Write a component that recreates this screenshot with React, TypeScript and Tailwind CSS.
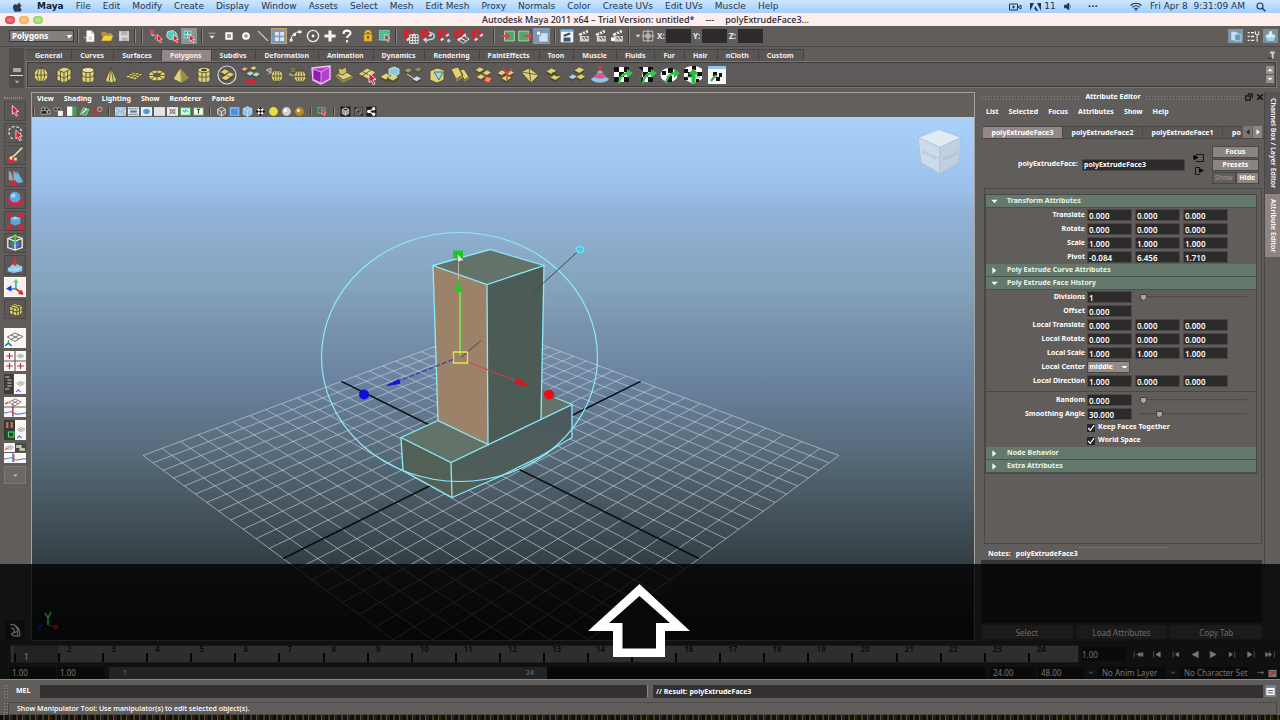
import React from 'react';

type IconProps = { children: React.ReactNode; className?: string; box?: string };

function Icon({ children, className = 'size-[20px]', box = '0 0 20 20' }: IconProps) {
  return (
    <svg viewBox={box} className={`${className} shrink-0`} aria-hidden="true">
      {children}
    </svg>
  );
}

function Grip({ className = 'h-[14px]' }: { className?: string }) {
  return <span className={`${className} w-[2px] shrink-0 border-x border-l-[#3c3a39] border-r-[#8b8886]`} />;
}

/* ---------- system menu bar ---------- */

const MENUS = [
  'File', 'Edit', 'Modify', 'Create', 'Display', 'Window', 'Assets', 'Select', 'Mesh', 'Edit Mesh',
  'Proxy', 'Normals', 'Color', 'Create UVs', 'Edit UVs', 'Muscle', 'Help',
];

function MenuBar() {
  return (
    <header className="flex h-[13px] shrink-0 items-center bg-linear-to-b from-[#cfe6ff] via-[#b4dbff] to-[#a9cdfb] pr-[14px] pl-[13px] font-['DejaVu_Sans',sans-serif] text-[9px] leading-[13px] text-[#22364f]">
      <Icon className="mr-[14px] size-[10px]" box="0 0 24 24">
        <path
          fill="#2b3a52"
          d="M16.5 1c.2 1.500-.4 3-1.300 4-.9 1.100-2.300 1.900-3.700 1.800-.2-1.400.5-2.900 1.300-3.800C13.700 1.900 15.300 1.100 16.500 1zM21 17.300c-.6 1.300-.9 1.900-1.600 3-1 1.600-2.500 3.500-4.300 3.500-1.600 0-2-1-4.200-1s-2.700 1-4.300 1c-1.800 0-3.200-1.700-4.200-3.300C-.4 16.100-.700 11 1.100 8.300 2.400 6.400 4.400 5.200 6.300 5.200c2 0 3.200 1.100 4.800 1.100 1.600 0 2.500-1.100 4.800-1.100 1.700 0 3.500.9 4.800 2.500-4.200 2.300-3.500 8.300.3 9.600z"
        />
      </Icon>
      <nav className="flex gap-[12px]" aria-label="Application">
        <button className="font-bold text-[#10203a]">Maya</button>
        {MENUS.map((m) => (
          <button key={m} className="whitespace-nowrap">{m}</button>
        ))}
      </nav>
      <div className="ml-auto flex items-center gap-[8px] whitespace-nowrap">
        <Icon className="h-[8px] w-[13px]" box="0 0 13 8">
          <path d="M.5 1h8v6h-8zM9 4l3-2v4z" fill="none" stroke="#22364f" />
          <path d="M3 4h3M4.500 2.500v3" stroke="#22364f" />
        </Icon>
        <span className="flex items-center gap-[3px]">
          <Icon className="h-[8px] w-[11px]" box="0 0 11 8">
            <path d="M0 0h4L0 8zM11 0H7l4 8zM5.500 3l2.500 5H6L5 6H4z" fill="#22364f" />
          </Icon>
          11
        </span>
        <Icon className="h-[7px] w-[8px]" box="0 0 8 7">
          <path d="M0 2.200h2L5 0v7L2 4.800H0zM6.500 2.500v2" fill="#22364f" stroke="#22364f" strokeWidth=".6" />
        </Icon>
        <span className="mx-[8px] font-bold">···</span>
        <Icon className="ml-[16px] h-[9px] w-[12px]" box="0 0 12 9">
          <path d="M.6 3.500a7.600 7.600 0 0 1 10.800 0M2.400 5.300a5 5 0 0 1 7.200 0M4.200 7.100a2.500 2.500 0 0 1 3.600 0" fill="none" stroke="#22364f" strokeWidth="1.200" />
          <circle cx="6" cy="8.200" r=".8" fill="#22364f" />
        </Icon>
        <span>Fri Apr 8&nbsp; 9:31:09 AM</span>
        <Icon className="ml-[3px] size-[10px]" box="0 0 10 10">
          <circle cx="4" cy="4" r="3" fill="none" stroke="#22364f" strokeWidth="1.100" />
          <path d="M6.200 6.200 9.300 9.300" stroke="#22364f" strokeWidth="1.500" />
        </Icon>
      </div>
    </header>
  );
}

function TitleBar() {
  return (
    <div className="flex h-[13px] shrink-0 items-center bg-[#fdeeee] pl-[5px] text-[9px] leading-[13px] text-[#2a2530]">
      <div className="flex w-[477px] gap-[4px]">
        <button aria-label="Close" className="h-[8px] w-[10px] rounded-full bg-radial from-[#f6848c] to-[#c9202f]" />
        <button aria-label="Minimize" className="h-[8px] w-[10px] rounded-full bg-radial from-[#ffd596] to-[#ee9a3a]" />
        <button aria-label="Zoom" className="h-[8px] w-[10px] rounded-full bg-radial from-[#c4f08e] to-[#7cc84a]" />
      </div>
      <h1 className="flex gap-[11px] font-medium whitespace-nowrap">
        <span>Autodesk Maya 2011 x64 – Trial Version: untitled*</span>
        <span>---</span>
        <span>polyExtrudeFace3...</span>
      </h1>
    </div>
  );
}

/* ---------- status line ---------- */

const RedArrow = ({ x = 0, y = 0 }: { x?: number; y?: number }) => (
  <path transform={`translate(${x} ${y})`} d="M0 0l7 6.500-3 .3 2 4-1.800.9-2-4L0 9.500z" fill="#e0162b" stroke="#fff" strokeWidth=".8" />
);

const Magnet = ({ children }: { children?: React.ReactNode }) => (
  <Icon className="size-[17px]">
    <g transform="rotate(-38 8 8)">
      <path d="M2 13V7a6 6 0 0 1 12 0v6h-4V7a2 2 0 0 0-4 0v6z" fill="#dc1f2c" />
      <path d="M2 10.500h4V13H2zM10 10.500h4V13h-4z" fill="#f2dada" />
    </g>
    {children}
  </Icon>
);

const STATUS_FILE = [
  <><path d="M5 2h7l4 4v12H5z" fill="#fff" /><path d="M12 2v4h4M8 12h5M8 14.500h5" fill="none" stroke="#999" /><path d="M1 12h4v6h11" stroke="#e3e3e3" fill="none" /></>,
  <><path d="M2 4h6l2 2h7v4H2z" fill="#b8942a" /><path d="M2 17l3-8h14l-3 8z" fill="#f2cf45" stroke="#8a6c16" strokeWidth=".6" /></>,
  <><path d="M3 3h14v14H3z" fill="#dcdcdc" /><path d="M6 3h9v6H6zM7 12h8v5H7z" fill="#b5b0b0" /></>,
];

const STATUS_SELECT = [
  <><path d="M4 3v6h5v6M4 9h9" stroke="#ddd" fill="none" /><path d="M1 1h6v5H1zM8 8h4v4H8z" fill="#d84b63" /><RedArrow x={12} y={8} /></>,
  <><path d="M2 4l8-2 5 4-1 8-9 1-4-4z" fill="#59c5c5" stroke="#d6ffff" /><path d="M8 8h9v8H8z" fill="#6fd1b5" /><RedArrow x={11} y={8} /></>,
];

const STATUS_MASK = [
  <path d="M5 6h10M7 10h6l-3 3.500z" stroke="#ddd" fill="#ddd" />,
  <path d="M6 6h8v8H6z" fill="#9a9a9a" stroke="#fff" strokeWidth="2.500" />,
  <circle cx="10" cy="10" r="4" fill="#888" stroke="#fff" strokeWidth="3" />,
  <path d="M3 3l14 14" stroke="#cfcfcf" strokeWidth="1.800" />,
];

const STATUS_MASK2 = [
  <><path d="M3 17C3 8 8 4 17 4" fill="none" stroke="#ddd" strokeWidth="1.500" /><path d="M6 6h4v4H6zM13 2h5v4h-5zM1 14h4v4H1z" fill="#eee" /></>,
  <><circle cx="10" cy="10" r="8" fill="none" stroke="#e8e8e8" strokeWidth="2" /><circle cx="10" cy="10" r="2" fill="#fff" /></>,
  <path d="M10 2v16M2 10h16" stroke="#f1f1f1" strokeWidth="4.500" />,
  <><path d="M5 7c0-6 10-6 10-1 0 3-5 3-5 7" fill="none" stroke="#fff" strokeWidth="3" /><path d="M8.500 16h3v3h-3z" fill="#fff" /></>,
];

function Slot({ children }: { children: React.ReactNode }) {
  return (
    <button className="flex w-[17px] shrink-0 items-center justify-center" aria-label="Status line tool">
      <Icon className="size-[14px]">{children}</Icon>
    </button>
  );
}

function StatusLine() {
  return (
    <div className="flex h-[21px] shrink-0 items-center border-b border-[#4b4948] pr-[2px] pl-[9px] text-[8px] font-bold text-[#eee]">
      <select
        aria-label="Menu set"
        defaultValue="Polygons"
        className="mr-[3px] h-[12px] w-[65px] appearance-none border border-[#3b3938] bg-[#858080] bg-[linear-gradient(45deg,transparent_50%,#fff_50%),linear-gradient(-45deg,transparent_50%,#fff_50%)] bg-[size:3px_3px] bg-[position:56px_4px,59px_4px] bg-no-repeat pl-[2px] text-[8px] leading-[10px] font-bold text-white"
      >
        <option>Polygons</option>
      </select>
      <Grip />
      <div className="mx-[2px] flex">{STATUS_FILE.map((c, i) => <Slot key={i}>{c}</Slot>)}</div>
      <Grip />
      <span className="w-[5px]" />
      <Grip />
      <div className="ml-[4px] flex">{STATUS_SELECT.map((c, i) => <Slot key={i}>{c}</Slot>)}</div>
      <button className="mr-[4px] flex size-[16px] items-center justify-center bg-[#8a9596]" aria-label="Select by component">
        <Icon className="size-[14px]"><path d="M3 3h10v10H3z" fill="#4fae9e" stroke="#d8fff6" strokeDasharray="2 1" /><path d="M8 3v10M3 8h10" stroke="#e8fffa" /><RedArrow x={11} y={8} /></Icon>
      </button>
      <Grip />
      <div className="flex">{STATUS_MASK.map((c, i) => <Slot key={i}>{c}</Slot>)}</div>
      <button className="flex size-[16px] items-center justify-center border border-[#c5a360] bg-[#8296ab]" aria-label="Faces">
        <Icon className="size-[13px]"><path d="M3 3h6v6H3zM11 3h6v6h-6zM3 11h6v6H3zM11 11h6v6h-6z" fill="#d5e8f7" /></Icon>
      </button>
      <div className="flex">{STATUS_MASK2.map((c, i) => <Slot key={i}>{c}</Slot>)}</div>
      <span className="w-[4px]" />
      <div className="flex">
        <Slot><path d="M6 8c0-7 8-7 8 0" fill="none" stroke="#e5b93c" strokeWidth="3" /><path d="M4 7h12v11H4z" fill="#e8b52b" stroke="#8c6812" /><path d="M9 10h2v4H9z" fill="#4c3500" /></Slot>
        <Slot><path d="M2 2h14v14H2z" fill="#4fb6a4" stroke="#daffda" strokeDasharray="2 1.500" /><path d="M2 8h14M8 2v14" stroke="#4de04d" /><RedArrow x={10} y={7} /></Slot>
      </div>
      <span className="w-[2px]" />
      <Grip />
      <div className="mr-[6px] ml-[5px] flex">
        <Magnet><path d="M9 8h10v10H9zM12.300 8v10M15.600 8v10M9 11.300h10M9 14.600h10" fill="none" stroke="#eee" strokeWidth="1.100" /></Magnet>
        <Magnet><path d="M8 17c0-6 10-1 10-7s-6-3-6-6" fill="none" stroke="#b9dcf5" strokeWidth="1.600" /></Magnet>
        <Magnet><circle cx="15" cy="15" r="2" fill="#9fd8ff" /></Magnet>
        <Magnet><path d="M6 14l7-5 6 4-7 5zM9.500 11.500l6 4M13 14l-4-2" fill="none" stroke="#f0f0f0" strokeWidth="1.100" /></Magnet>
        <Magnet />
      </div>
      <Grip />
      <div className="ml-[4px] flex">
        <Slot><path d="M5 3h14v14H5z" fill="#4ea86a" stroke="#c8f5cf" /><path d="M0 10h10M7 6l4 4-4 4" stroke="#e43c4d" fill="none" strokeWidth="2.500" /></Slot>
        <Slot><path d="M1 3h14v14H1z" fill="#4ea86a" stroke="#c8f5cf" /><path d="M9 10h8M15 6l4 4-4 4" stroke="#e43c4d" fill="none" strokeWidth="2.500" /></Slot>
      </div>
      <button className="mr-[4px] flex h-[16px] w-[17px] items-center justify-center bg-[#7f96b3]" aria-label="Construction history">
        <Icon className="size-[14px]"><path d="M6 6h12v12H6z" fill="#c9e2f5" /><path d="M2 3h6v6H2z" fill="#eaf6ff" stroke="#5d7894" /></Icon>
      </button>
      <Grip />
      <div className="mr-[2px] ml-[2px] flex">
        <Slot><path d="M1 1h18v18H1z" fill="#f5f5f5" /><path d="M1 1h18v3H1z" fill="#6db4e8" /><path d="M4 9l9-4 3 2-9 4zM5 12h10v6H5z" fill="#35576e" /></Slot>
        {[0, 1, 2].map((i) => (
          <Slot key={i}>
            <path d="M2 7l13-6 1 4-12 5z" fill="#f0f0f0" />
            <path d="M4 10h13v8H4z" fill="#cfcfcf" />
            <path d="M7 5l2 3M11 3l2 3M8 12l3 3M12 11l3 3" stroke="#444" strokeWidth="1.500" />
            {i === 2 && <path d="M0 12h5v5H0z" fill="#fff" />}
          </Slot>
        ))}
      </div>
      <Grip />
      <div className="ml-[5px] flex items-center">
        <Icon className="size-[6px]"><path d="M2 6h16l-8 9z" fill="#ddd" /></Icon>
        <Icon className="mx-px size-[12px]"><path d="M2 2h16v16H2zM10 0v20M0 10h20M7 7h6v6H7z" fill="none" stroke="#ddd" strokeWidth="1.300" /></Icon>
        {['X', 'Y', 'Z'].map((a) => (
          <label key={a} className="flex items-center text-[8px]">
            <span className="w-[11px] pl-[2px]">{a}:</span>
            <input className="h-[14px] w-[25px] bg-[#2d2b2b]" />
          </label>
        ))}
      </div>
      <div className="ml-auto flex items-center gap-[3px]">
        <button className="flex h-[14px] w-[15px] items-center justify-center bg-[#7f96a8]" aria-label="Attribute editor">
          <Icon className="size-[12px]"><path d="M2 3h8l3 3v11H2z" fill="#bfe0ee" /><path d="M8 7h10v11H8z" fill="#5f9fb5" stroke="#d7f1f8" /></Icon>
        </button>
        <button className="flex w-[14px] items-center justify-center" aria-label="Tool settings">
          <Icon className="size-[13px]"><path d="M1 4h3M6 4h5M1 10h3M6 10h5M1 16h3M6 16h5" stroke="#eee" strokeWidth="2" /><path d="M13 2v4l2.500 2V18M18 2v4l-2.500 2" fill="none" stroke="#eee" strokeWidth="1.600" /></Icon>
        </button>
        <button className="flex h-[14px] w-[15px] items-center justify-center bg-[#7f8f99]" aria-label="Channel box">
          <Icon className="size-[13px]"><path d="M2 9c4-6 12-6 16 0l-3 8H5z" fill="#9bd3e8" /><path d="M8 2h4v6H8zM4 8h12v3H4z" fill="#e3f5fb" /></Icon>
        </button>
      </div>
    </div>
  );
}

/* ---------- shelf ---------- */

const SHELF_TABS = [
  'General', 'Curves', 'Surfaces', 'Polygons', 'Subdivs', 'Deformation', 'Animation', 'Dynamics',
  'Rendering', 'PaintEffects', 'Toon', 'Muscle', 'Fluids', 'Fur', 'Hair', 'nCloth', 'Custom',
];

const GOLD = '#ddd07e';
const DARK = '#4f4720';

const Sphere = ({ cx = 10, cy = 10, r = 7 }: { cx?: number; cy?: number; r?: number }) => (
  <g fill="none" stroke={DARK} strokeWidth=".8">
    <circle cx={cx} cy={cy} r={r} fill={GOLD} />
    <path d={`M${cx - r} ${cy}h${r * 2}M${cx} ${cy - r}v${r * 2}`} />
    <ellipse cx={cx} cy={cy} rx={r / 2} ry={r} />
  </g>
);

const Slab = ({ x, y, fill = GOLD, s = 1 }: { x: number; y: number; fill?: string; s?: number }) => (
  <g transform={`translate(${x} ${y}) scale(${s})`}>
    <path d="M0 4l6-4 6 3-6 4z" fill={fill} stroke={DARK} strokeWidth=".6" />
    <path d="M0 4l6 3v2L0 6zM6 7l6-4v2L6 9z" fill={DARK} fillOpacity=".75" />
  </g>
);

const Checker = () => (
  <>
    <path d="M1 2h15v15H1z" fill="#fff" />
    <path d="M1 2h5v5H1zM11 2h5v5h-5zM6 7h5v5H6zM1 12h5v5H1zM11 12h5v5h-5z" fill="#111" />
  </>
);

const GreenArrow = () => (
  <path d="M5 18c1-7 4-10 9-11V4l6 4-6 5V9.500c-4 1-6 4-7 9z" fill="#2fc64a" />
);

const SHELF: React.ReactNode[] = [
  <Sphere />,
  <><path d="M3 5l7-3 7 2v10l-7 4-7-3z" fill={GOLD} stroke={DARK} strokeWidth=".8" /><path d="M3 5l7 2.500L17 4M10 7.500V18M3 10l7 3 7-3.500M6.500 6v10.500M13.500 6v10" fill="none" stroke={DARK} strokeWidth=".8" /></>,
  <><path d="M4 5v10c0 3.500 12 3.500 12 0V5z" fill={GOLD} stroke={DARK} strokeWidth=".8" /><ellipse cx="10" cy="5" rx="6" ry="2.500" fill="#efe6a6" stroke={DARK} strokeWidth=".8" /><path d="M4 10c0 3 12 3 12 0M8 7v10M12 7v10" fill="none" stroke={DARK} strokeWidth=".8" /></>,
  <><path d="M10 2L4.500 15c1 3.500 10 3.500 11 0z" fill={GOLD} stroke={DARK} strokeWidth=".8" /><path d="M10 2L8 17.500M10 2l2.500 15.500" stroke={DARK} strokeWidth=".8" /></>,
  <><path d="M1 12l8-5 10 2-8 6z" fill={GOLD} stroke={DARK} strokeWidth=".8" /><path d="M4 10l9.500 2.500M6.500 8.500L16 11M4.500 13l8-5.500M8 14l8-5.500" fill="none" stroke={DARK} strokeWidth=".8" /></>,
  <><ellipse cx="10" cy="10.500" rx="8.500" ry="5.500" fill={GOLD} stroke={DARK} strokeWidth=".8" /><ellipse cx="10" cy="10" rx="3.500" ry="1.800" fill="#5f5c5b" stroke={DARK} strokeWidth=".8" /><path d="M1.500 10.500h5M13.500 10.500h5M10 5v3M10 12v4M4 6.500L7.500 9M16 6.500L12.500 9M4 14.500L7.500 11.500M16 14.500L12.500 11.500" stroke={DARK} strokeWidth=".8" /></>,
  <><path d="M9 3L2 14l8 4 8-5z" fill={GOLD} stroke={DARK} strokeWidth=".8" /><path d="M9 3l1 15 8-5z" fill="#9b9048" /></>,
  <><path d="M4 5v10c0 3.500 12 3.500 12 0V5z" fill={GOLD} stroke={DARK} strokeWidth=".8" /><ellipse cx="10" cy="5" rx="6" ry="2.500" fill="#efe6a6" stroke={DARK} strokeWidth=".8" /><ellipse cx="10" cy="5" rx="3" ry="1.200" fill={DARK} /><path d="M4 10c0 3 12 3 12 0M8 7v10M12 7v10" fill="none" stroke={DARK} strokeWidth=".8" /></>,
  <><circle cx="10" cy="10" r="9" fill="none" stroke="#d9d9d9" strokeWidth="1.200" /><Slab x={3} y={4} s={0.8} /><Slab x={8} y={7} s={0.8} /><Slab x={4} y={10} s={0.8} /></>,
  <><Slab x={0} y={2} s={0.6} fill="#d9b58a" /><Slab x={9} y={1} s={0.6} /><Slab x={5} y={6} s={0.7} fill="#a8d8ef" /><Slab x={11} y={7} s={0.7} fill="#a8d8ef" /><path d="M3 14l7 0 7 2-6 3-7-2z" fill="#d3233b" /></>,
  <><path d="M2 5l5-2v5zM4 9l4-2" fill="#8e8b8a" stroke="#b6b3b1" /><Sphere cx={13} cy={11} r={6} /></>,
  <><Sphere cx={6} cy={5} r={3} /><path d="M2 9l5 2" stroke="#999" strokeWidth="2" /><Sphere cx={13} cy={11.500} r={6} /></>,
  <><path d="M1 3l18-2v13l-9 5-8-4z" fill="#b63fd0" stroke="#f5c8ff" strokeWidth="1.300" /><path d="M2 4l8 3v11l-8-4zM10 7l9-5" fill="#8c1fae" stroke="#f0b3ff" strokeWidth=".8" /></>,
  <><path d="M2 9l7 6 10-4-7-4z" fill={GOLD} stroke={DARK} strokeWidth=".8" /><path d="M2 9l7 6v3l-7-6zM9 15l10-4v2l-10 5z" fill="#8e843f" /><path d="M4 3l4 1 4-2 1 5-4 3-4-1z" fill="#c9bd70" stroke={DARK} strokeWidth=".8" /></>,
  <><path d="M1 9l9-6 9 4-8 7z" fill={GOLD} stroke={DARK} strokeWidth=".8" /><path d="M5 6.500l9 4.500M5 11l9-6" stroke={DARK} strokeWidth=".8" /><RedArrow x={12} y={8} /></>,
  <><Slab x={0} y={8} /><Slab x={7} y={9} /><path d="M9 4l5-2 5 2v5l-5 2-5-2z" fill="#8fc9d6" stroke="#dff" strokeWidth=".7" /></>,
  <><Slab x={0} y={3} s={0.7} fill="#a39c7a" /><Slab x={10} y={2} s={0.7} fill="#8f8b7c" /><Slab x={8} y={11} s={0.8} fill="#bfe3f5" /><path d="M3 9l9 6" stroke="#ddd" /></>,
  <><path d="M3 6l7-3 7 2v10l-7 3-7-3z" fill={GOLD} stroke={DARK} strokeWidth=".8" /><path d="M7 7h9l-4 8z" fill="#9fd5e8" stroke="#2d5f70" strokeWidth=".8" /></>,
  <><path d="M1 4l7-2 5 8-7 4zM10 5l4-1 5 8-5 3z" fill={GOLD} stroke={DARK} strokeWidth=".8" /><path d="M6 14l7-4v3l-7 4zM14 15l5-3v2l-5 3z" fill="#8e843f" /></>,
  <><Slab x={1} y={2} s={0.8} /><Slab x={8} y={5} s={0.8} /><Slab x={2} y={9} s={0.8} /><path d="M12 11l6 2-3 5-5-2z" fill="#e88f6b" stroke="#b3332a" /></>,
  <><Slab x={0} y={5} s={0.8} /><Slab x={8} y={5} s={0.8} /><Slab x={4} y={10} s={0.9} /><path d="M6 3l4 6 5-6M10 9v6" stroke="#d2403d" fill="none" strokeWidth="1.400" /></>,
  <><path d="M1 7l8-4 10 7-8 8z" fill={GOLD} stroke={DARK} strokeWidth=".8" /><path d="M9 3l2 15M1 7l18 3" stroke={DARK} strokeWidth=".8" /></>,
  <><Slab x={2} y={3} s={0.9} /><Slab x={6} y={9} s={0.9} /><path d="M8 8l6 3" stroke={DARK} strokeWidth="1.500" /></>,
  <><Slab x={7} y={2} s={0.9} /><Slab x={1} y={9} s={0.8} fill="#9ed2f0" /><Slab x={9} y={9} s={0.8} /></>,
  <><path d="M1 14c4-2 6-5 8-9h2c2 4 4 7 8 9-3 5-15 5-18 0z" fill="#8ec7e8" /><path d="M4 12c4 2 9 2 12 0l-3-4H8z" fill="#e0538c" /><path d="M10 0v6" stroke="#e33" strokeWidth="2" /></>,
  <><Checker /><GreenArrow /></>,
  <><Checker /><path d="M1 2l5 4-2 11H1z" fill="#5f5c5b" /><GreenArrow /></>,
  <><ellipse cx="9" cy="10" rx="8.500" ry="7" fill="#fff" /><path d="M2 6h4v4H2zM7 11h5v6H7zM8 3h5v5H8z" fill="#111" /><GreenArrow /></>,
  <><path d="M1 4c4-4 14-4 18 0v10l-9 5-9-5z" fill="#fff" /><path d="M1 4h4v4H1zM9 1h4v4H9zM14 7h5v4h-5zM1 12h4v3H1zM5 7h4v5H5zM13 14h3v3h-3z" fill="#111" /><path d="M9 18V9H6l4.500-5L15 9h-3v9zM3 12h14" fill="#2bbd45" stroke="#2bbd45" /></>,
  <><path d="M1 1h18v18H1z" fill="#f7f7f7" /><path d="M1 1h18v3H1z" fill="#8fc8ef" /><path d="M6 7h4v4H6zM12 8h3v4h-3zM9 12h4v4H9z" fill="#111" /><path d="M4 16l5-6" stroke="#2fae45" strokeWidth="2" /></>,
];

function Shelf() {
  return (
    <div className="flex h-[43px] shrink-0 pt-px">
      <div className="flex w-[27px] justify-end pr-[3px]">
        <div className="flex h-[40px] w-[15px] flex-col items-center justify-end gap-[3px] bg-[#4f4d4c] pb-[3px]">
          <button aria-label="Shelf menu" className="h-[4px] w-[8px] bg-[#aaa6a4]" />
          <span className="h-px w-[13px] bg-[#ddd]" />
          <Icon className="size-[6px]"><path d="M2 6h16l-8 9z" fill="#aaa" /></Icon>
        </div>
      </div>
      <div className="flex min-w-0 flex-1 flex-col">
        <div className="flex h-[14px] items-end" role="tablist">
          {SHELF_TABS.map((t) => (
            <button
              key={t}
              role="tab"
              aria-selected={t === 'Polygons'}
              className={`h-[13px] border-t border-r border-[#454342] pr-[9px] pl-[8px] text-[7px] leading-[12px] font-bold whitespace-nowrap text-[#f2f0ef] ${t === 'Polygons' ? 'bg-[#958787]' : 'bg-[#595655]'}`}
            >
              {t}
            </button>
          ))}
          <Icon className="mr-[4px] mb-[3px] ml-auto size-[8px]"><path d="M5 1h12v5h-3v13H9V6H5z" fill="#d0cdcb" /><path d="M0 18h10" stroke="#222" strokeWidth="2" /></Icon>
        </div>
        <div className="mr-[4px] flex h-[25px] items-center border border-[#3d3b3a] bg-[#5d5a59] outline outline-[#7a7775]">
          <div className="ml-[3px] flex w-[696px] justify-between">
            {SHELF.map((s, i) => (
              <button key={i} aria-label={`Shelf item ${i + 1}`} className="flex w-[20px] justify-center">
                <Icon className="size-[20px]">{s}</Icon>
              </button>
            ))}
          </div>
          <div className="mr-[1px] ml-auto flex flex-col gap-px">
            <button aria-label="Scroll up" className="bg-[#948f8d]"><Icon className="size-[8px]"><path d="M4 13h12l-6-7z" fill="#fff" /></Icon></button>
            <button aria-label="Scroll down" className="bg-[#948f8d]"><Icon className="size-[8px]"><path d="M4 7h12l-6 7z" fill="#fff" /></Icon></button>
          </div>
        </div>
      </div>
    </div>
  );
}

/* ---------- tool box ---------- */

const TOOLS: { name: string; art: React.ReactNode; active?: boolean }[] = [
  { name: 'Select', art: <RedArrow x={7} y={4} /> },
  { name: 'Lasso', art: <><path d="M4 12c-3-6 2-10 7-9s7 3 5 8M5 15l4 2" fill="none" stroke="#ddd" strokeWidth="1.500" strokeDasharray="3 2" /><RedArrow x={11} y={7} /></> },
  { name: 'Paint select', art: <><path d="M2 14l5-3 5 3-4 4-5 1z" fill="#e0273a" /><path d="M18 2L9 11l-4 2" stroke="#f0dfa2" strokeWidth="1.800" fill="none" /><path d="M4 12h3v3H4zM9 13h3v3H9z" fill="#f6e7a0" /></> },
  { name: 'Move', art: <><path d="M3 3c3 0 5 7 5 11H3zM8 3c3 0 5 6 6 11H8z" fill="#a3a9ad" stroke="#666" strokeWidth=".5" /><path d="M12 3l7 12c-2 2-6 2-8 0z" fill="#6ab8ea" /><path d="M2 13l10 4 2-1-1 4H7z" fill="#dc2337" /></> },
  { name: 'Rotate', art: <><path d="M3 10c0 8 12 10 15 2l-3-1c-2 3-7 4-9 0z" fill="#dc2337" stroke="#dc2337" strokeWidth="2" /><circle cx="10" cy="8" r="6" fill="#59a8e6" /><circle cx="8" cy="6" r="2.500" fill="#a9d7f8" /></> },
  { name: 'Scale', art: <><path d="M1 1h6L1 7zM19 1h-6l6 6zM1 19h6l-6-6zM19 19h-6l6-6z" fill="#dc2337" /><path d="M2 2l16 16M18 2L2 18" stroke="#dc2337" strokeWidth="3" /><path d="M5 7l5-2 6 2v6l-6 2-5-2z" fill="#58a7e0" /><path d="M5 7l5 1.500L16 7l-6-2z" fill="#9bd1f5" /></> },
  { name: 'Universal manipulator', art: <><circle cx="10" cy="11" r="5" fill="#3b74c8" /><path d="M2 5l8-3 8 3v10l-8 3-8-3zM2 5l8 3 8-3M10 8v10" fill="none" stroke="#f2f2dc" strokeWidth="1.400" /><path d="M10 1v11M7 4l3-3 3 3" stroke="#57d44c" fill="none" strokeWidth="1.600" /></> },
  { name: 'Soft modification', art: <><path d="M2 14l6-5 2 2 2-2 6 3v5l-10 2-6-2z" fill="#84c8ea" /><path d="M2 14l8 2 8-4M6 11l8 5" stroke="#d9f2fd" strokeWidth=".8" fill="none" /><path d="M10 1v8M7.500 6.500L10 9.500l2.500-3" stroke="#d93434" strokeWidth="1.800" fill="none" /></> },
  { name: 'Show manipulator', active: true, art: <><path d="M11 12V4" stroke="#39bfa5" strokeWidth="2" /><path d="M8 5l3-4 3 4z" fill="#5ad64f" /><path d="M11 12H5" stroke="#2f9fbf" strokeWidth="2" /><path d="M6 8v7L0 12z" fill="#2733d4" /><path d="M11 12l5 4" stroke="#c33" strokeWidth="2" /><path d="M19 18l-5-.5 3-4z" fill="#e0203a" stroke="#e0203a" /></> },
  { name: 'Last tool', art: <><path d="M4 7l5-3 9 2v9l-6 3-8-3z" fill={GOLD} stroke={DARK} /><path d="M4 7l8 2.500L18 6M12 9.500V18M4 11l8 2.500 6-3M8 8v8M15 8v8M7 5.500l8 2" fill="none" stroke={DARK} /></> },
];

const Persp = ({ t = '' }: { t?: string }) => (
  <path transform={t} d="M3 9l7-4 7 3.500-7 5zM6.500 7l7 4M6.500 11.500L13.500 7" fill="none" stroke="#555" strokeWidth=".8" />
);

const Panes = ({ d }: { d: string }) => <path d={d} fill="#605d5b" />;

const LAYOUTS: { name: string; art: React.ReactNode }[] = [
  { name: 'Single perspective', art: <><Persp /><path d="M1 18l3-3 3 3" stroke="#2a62d8" fill="none" strokeWidth="1.500" /><path d="M4 12v3" stroke="#3b3" /></> },
  { name: 'Four view', art: <><Panes d="M9.500 0h1v20h-1zM0 9.500h20v1H0z" /><path d="M5 2v6M2 5h6M5 12v6M2 15h6M15 12v6M12 15h6" stroke="#a33" /><Persp t="translate(10.500 1) scale(.45)" /></> },
  { name: 'Outliner and perspective', art: <><path d="M0 0h9v20H0z" fill="#3d3b3a" /><path d="M1 3h4M3 6h4M3 9h4M3 12h4M1 15h4" stroke="#ccc" /><Persp t="translate(10 5) scale(.5)" /><path d="M11 18l2-2 2 2" stroke="#2a62d8" fill="none" /></> },
  { name: 'Perspective and graph', art: <><Persp t="translate(2 -2) scale(.8)" /><Panes d="M0 9.500h20v1H0z" /><path d="M8 7v13M0 16c5 0 5-3 9 0s6 0 11 0" stroke="#4480c8" fill="none" /><path d="M8 9v10M1 7l3-2" stroke="#c33" /></> },
  { name: 'Hypershade and perspective', art: <><path d="M0 0h10v20H0z" fill="#2f3d33" /><path d="M2 2h2v6H2zM6 2h2v6H6z" fill="#d66" /><path d="M4 12h5v5H4z" fill="none" stroke="#4e6" /><Persp t="translate(10.500 5) scale(.5)" /><path d="M12 18l2-2 2 2" stroke="#2a62d8" fill="none" /></> },
  { name: 'Perspective, graph and hypergraph', art: <><path d="M10 0h10v9H10z" fill="#4b4948" /><path d="M11 2h5v3h-5zM14 5h5v3h-5z" fill="#b9c7a5" /><Persp t="translate(0 0) scale(.5)" /><Panes d="M0 9h20v1H0z" /><path d="M8 10v9M0 16c5 0 6-3 9 0s6-1 11 0" stroke="#4480c8" fill="none" /><path d="M9 11v8M1 7l2-2" stroke="#c33" /></> },
];

function ToolBox() {
  return (
    <aside className="flex w-[31px] shrink-0 flex-col pt-[5px] pb-px pl-[4px]" aria-label="Tool box">
      <span className="mb-[2px] h-[2px] w-[18px] border-y border-dotted border-[#8a8785]" />
      <div className="flex flex-col gap-[2px]">
        {TOOLS.map((t) => (
          <button
            key={t.name}
            aria-label={t.name}
            className={`flex h-[20px] w-[22px] items-center justify-center border ${t.active ? 'border-white bg-[#f7eeee]' : 'border-[#4a4847] bg-[#5b5857]'}`}
          >
            <Icon className="size-[18px]">{t.art}</Icon>
          </button>
        ))}
      </div>
      <div className="mt-[9px] flex flex-col gap-[3px]">
        {LAYOUTS.map((l) => (
          <button key={l.name} aria-label={l.name} className="h-[20px] w-[22px] bg-[#fbf6f6]">
            <svg viewBox="0 0 20 20" preserveAspectRatio="none" className="h-full w-full" aria-hidden="true">{l.art}</svg>
          </button>
        ))}
        <button aria-label="More layouts" className="flex h-[18px] w-[22px] items-center justify-center border border-[#7c7977] bg-[#6b6866]">
          <Icon className="size-[5px]"><path d="M2 6h16l-8 9z" fill="#ccc" /></Icon>
        </button>
      </div>
      <button aria-label="Maya home" className="relative z-20 mt-auto mr-[6px] flex size-[20px] items-center justify-center self-center bg-[#0c0c0c]">
        <Icon className="size-[16px]"><path d="M4 3c8 0 13 6 12 14-4 1-9 0-11-2M5 8c3-1 5 2 4 5M9 4c4 2 5 8 4 12M5 15c3-2 8-2 10-5" fill="none" stroke="#666" strokeWidth="1.500" /></Icon>
      </button>
    </aside>
  );
}

/* ---------- viewport ---------- */

const project = (u: number, v: number): [number, number] => {
  const p = u - v;
  const q = u + v;
  const w = 1 - 0.1632 * q;
  return [491 + (174 * p) / w, (456 + 11.8 * q) / w];
};

const segment = (a: [number, number], b: [number, number]) => {
  const [x1, y1] = project(a[0], a[1]);
  const [x2, y2] = project(b[0], b[1]);
  return `M${x1.toFixed(1)} ${y1.toFixed(1)}L${x2.toFixed(1)} ${y2.toFixed(1)}`;
};

const GRID = Array.from({ length: 25 }, (_, i) => i / 12 - 1)
  .filter((t) => Math.abs(t) > 0.01)
  .map((t) => segment([t, -1], [t, 1]) + segment([-1, t], [1, t]))
  .join('');

const AXES = segment([0, -1], [0, 1]) + segment([-1, 0], [1, 0]);

function Scene() {
  return (
    <svg viewBox="32 117 942 524" preserveAspectRatio="xMidYMid slice" className="min-h-0 w-full flex-1" role="img" aria-label="Perspective view">
      <defs>
        <linearGradient id="sky" x1="0" y1="0" x2="0" y2="1">
          <stop offset="0" stopColor="#abd5fe" />
          <stop offset=".16" stopColor="#9cc0ec" />
          <stop offset=".2" stopColor="#92b3d8" />
          <stop offset=".34" stopColor="#83a3ba" />
          <stop offset=".4" stopColor="#7b94ad" />
          <stop offset=".5" stopColor="#6a83a0" />
          <stop offset=".62" stopColor="#586d7d" />
          <stop offset=".74" stopColor="#45525c" />
          <stop offset=".83" stopColor="#333e44" />
          <stop offset="1" stopColor="#15191b" />
        </linearGradient>
        <linearGradient id="side" x1="0" y1="0" x2="0" y2="1">
          <stop offset="0" stopColor="#4a5960" />
          <stop offset="1" stopColor="#525f55" />
        </linearGradient>
      </defs>
      <rect x="0" y="100" width="1010" height="560" fill="url(#sky)" />
      <path d={GRID} stroke="#c6cfd5" strokeOpacity=".72" strokeWidth=".9" fill="none" />
      <path d={AXES} stroke="#0b0d10" strokeWidth="1.600" />

      <path d="M401 438L438 421 541 389 572 405 451 463z" fill="#64736a" />
      <path d="M401 438L451 463 452 498 403 471z" fill="#536056" />
      <path d="M451 463L572 405 572 438 540 457 500 477 452 498z" fill="url(#side)" />
      <path d="M433 266L487 285 488 445 438 421z" fill="#9c8269" />
      <path d="M487 285L544 266 541 420 488 445z" fill="#4d5b56" />
      <path d="M433 266L490 250 544 266 487 285z" fill="#64736a" />
      <g fill="none" stroke="#8beafc" strokeWidth="1.300">
        <path d="M433 266L490 250 544 266 487 285zM433 266L438 421 488 445 487 285M544 266L541 420" />
        <path d="M438 421L401 438 451 463 572 405 555 398M401 438L403 471 452 498 451 463M572 405L572 438 540 457 500 477 452 498" />
        <ellipse cx="459.500" cy="357.500" rx="138" ry="124.500" strokeWidth="1.200" />
      </g>
      <path d="M580 250L532 294M481 341L461 358" stroke="#3f4a52" strokeWidth="1" />
      <ellipse cx="580" cy="250" rx="4.500" ry="4" fill="#6fdcf5" />
      <ellipse cx="580" cy="250" rx="2" ry="1.600" fill="none" stroke="#2e9cc0" strokeWidth=".8" />
      <path d="M458.500 262v18" stroke="#b9b9ad" />
      <path d="M460 290v66" stroke="#7eff3d" strokeWidth="1.300" />
      <path d="M458.500 281l-2.500 11h5z" fill="#17d21a" stroke="#17d21a" />
      <path d="M453 251h10v8h-10z" fill="#1fc824" />
      <path d="M457 254l7 7-3.500.300-2.500 2z" fill="#f4f4f4" stroke="#555" strokeWidth=".5" />
      <path d="M453.500 352.500h14v11h-14z" fill="none" stroke="#f1e04d" strokeWidth="1.300" />
      <path d="M453 360L400 381" stroke="#3730a8" strokeWidth="1.100" strokeDasharray="5 2" />
      <path d="M387 386l12-6 1 4z" fill="#1616d8" stroke="#1616d8" />
      <circle cx="364" cy="395" r="5" fill="#0c0ce0" />
      <path d="M469 363L518 382" stroke="#dd3b42" strokeWidth="1" />
      <path d="M528 386l-11-7-2 5z" fill="#e3101c" stroke="#e3101c" />
      <circle cx="549" cy="395" r="5" fill="#e60d1a" />

      <g stroke="#a9c2d6" strokeWidth=".8">
        <path d="M918 138l21-8 22 8-21 10z" fill="#e1ebf4" />
        <path d="M918 138l22 10v26l-19-11z" fill="#cddcea" />
        <path d="M961 138l-21 10v26l19-11z" fill="#bed0e2" />
      </g>
      <g fill="#a3b7c9" fontFamily="Liberation Sans, sans-serif" fontSize="5">
        <text transform="translate(922 154) skewY(24)">FRONT</text>
        <text transform="translate(943 162) skewY(-26)">RIGHT</text>
      </g>
    </svg>
  );
}

const PANEL_ICONS: React.ReactNode[][] = [
  [
    <><path d="M2 8h11v7H2zM13 10l5-3v8l-5-3z" fill="#222" stroke="#eee" /><circle cx="6" cy="6" r="3" fill="#222" stroke="#eee" /><circle cx="12" cy="6" r="3" fill="#222" stroke="#eee" /></>,
    <><circle cx="5" cy="6" r="3" fill="#222" stroke="#eee" /><circle cx="11" cy="6" r="3" fill="#222" stroke="#eee" /><path d="M9 9h9v9H9z" fill="#f3f3f3" /></>,
    <><path d="M2 1h10v17H2z" fill="#fff" /><path d="M12 1h7v17h-7z" fill="#2fae45" /></>,
    <><path d="M2 15l6-12 10 3-5 11z" fill="#3fae55" stroke="#d6ffd6" /><path d="M6 13l8-8" stroke="#fff" strokeWidth="2" /></>,
    <><path d="M3 17L14 5" stroke="#d8283a" strokeWidth="3" /><circle cx="14" cy="6" r="4" fill="none" stroke="#e88" strokeWidth="2" /><circle cx="5" cy="6" r="2.500" fill="#c22" /></>,
  ],
  [
    <><path d="M0 2h20v16H0z" fill="#b5d3ea" /><path d="M1 3l9 8 9-8M1 17l6-7M19 17l-6-7" stroke="#56809f" fill="none" /></>,
    <><path d="M0 2h20v16H0z" fill="#e6eef5" /><path d="M1 5h18M1 15h18" stroke="#35506b" strokeWidth="2" strokeDasharray="2 1" /><path d="M4 8h12v4H4z" fill="#4a78a8" /></>,
    <><path d="M0 2h20v16H0z" fill="#e6f2fb" /><ellipse cx="10" cy="10" rx="6" ry="5" fill="#4c9be0" /></>,
    <path d="M0 2h20v16H0z" fill="#e4e4e4" />,
    <><path d="M0 2h20v16H0z" fill="#ececec" /><path d="M4 5l12 10M16 5L4 15M6 7h8v6H6z" fill="none" stroke="#4b3a3a" /></>,
    <><path d="M1 3h18v14H1z" fill="#effff0" stroke="#3cae4a" strokeWidth="2" /><path d="M5 7l3 4 3-4 4 4" stroke="#38a8c8" fill="none" strokeWidth="2" /></>,
    <><path d="M1 3h18v14H1z" fill="#effff0" stroke="#3cae4a" strokeWidth="2" /><path d="M7 6h6M10 6v8" stroke="#333" strokeWidth="2" /></>,
  ],
  [
    <path d="M3 6l7-4 7 4v8l-7 4-7-4zM3 6l7 4 7-4M10 10v8" fill="#777" stroke="#eee" strokeWidth="1.500" />,
    <><path d="M1 2h18v16H1z" fill="#7fb6ee" /><path d="M4 5h12v11H4z" fill="#4c8fdc" /></>,
    <><path d="M2 5l8-4 8 4v10l-8 4-8-4z" fill="#8cc0ee" stroke="#e8f6ff" /><path d="M2 5l8 4 8-4M10 9v10" stroke="#e8f6ff" fill="none" /></>,
    <><path d="M10 1l9 9-9 9-9-9z" fill="#fff" /><path d="M10 1l3 3-3 3-3-3zM4 7l3 3-3 3-3-3zM16 7l3 3-3 3-3-3zM10 7l3 3-3 3-3-3zM10 13l3 3-3 3-3-3z" fill="#111" /></>,
    <circle cx="10" cy="10" r="8" fill="#e8e03a" />,
    <><circle cx="10" cy="10" r="8" fill="#d8cfcf" /><circle cx="8" cy="8" r="3" fill="#fff" /></>,
    <><circle cx="10" cy="10" r="8" fill="#b98a28" /><circle cx="8" cy="8" r="3" fill="#ffe9a3" /></>,
  ],
  [<><path d="M2 3h13v10H2z" fill="none" stroke="#48d05a" strokeWidth="2" strokeDasharray="3 1" /><RedArrow x={9} y={6} /></>],
  [
    <><path d="M1 1h18v18H1z" fill="#1d1d1d" /><path d="M4 6l6-3 6 3v8l-6 3-6-3zM4 6l6 3 6-3M10 9v8" fill="#999" stroke="#eee" /></>,
    <><path d="M2 2h16v16H2z" fill="#2b2b2b" /><path d="M4 7h9v9H4zM7 4h9v9H7z" fill="none" stroke="#ccc" /></>,
    <><path d="M1 1h18v18H1z" fill="#1d1d1d" /><path d="M5 10l9-5M5 10l9 5" stroke="#fff" strokeWidth="2" /><circle cx="5" cy="10" r="3" fill="#fff" /><circle cx="14" cy="5" r="3" fill="#fff" /><circle cx="14" cy="15" r="3" fill="#fff" /></>,
  ],
];

function Viewport() {
  return (
    <main className="relative flex min-w-0 flex-1 flex-col border border-[#a5a19f]">
      <nav className="flex h-[12px] shrink-0 items-center gap-[10px] bg-[#625f5d] pl-[5px] text-[7px] leading-[12px] font-bold text-white" aria-label="Panel">
        {['View', 'Shading', 'Lighting', 'Show', 'Renderer', 'Panels'].map((m) => (
          <button key={m}>{m}</button>
        ))}
      </nav>
      <div className="flex h-[12px] shrink-0 items-center gap-[5px] bg-[#625f5d] pl-px">
        {PANEL_ICONS.map((group, g) => (
          <React.Fragment key={g}>
            <Grip className="h-[8px]" />
            <div className="flex gap-[2px]">
              {group.map((art, i) => (
                <button key={i} aria-label={`Panel tool ${g + 1}.${i + 1}`}>
                  <Icon className="h-[11px] w-[11px]">{art}</Icon>
                </button>
              ))}
            </div>
          </React.Fragment>
        ))}
      </div>
      <Scene />
      <svg viewBox="0 0 28 22" className="absolute bottom-[8px] left-[4px] z-20 h-[22px] w-[28px]" role="img" aria-label="View axis">
        <path d="M12 15V8M9 3l3 5 3-6" stroke="#1f8a2b" strokeWidth="1.300" fill="none" />
        <path d="M12 15l6 2M18 15l4 4M22 15l-4 4" stroke="#5d0f14" strokeWidth="1.200" />
        <path d="M2 15h4l-4 4h4" stroke="#0c0c50" strokeWidth="1.200" fill="none" />
      </svg>
    </main>
  );
}

/* ---------- attribute editor ---------- */

function SectionHead({ title, open = false }: { title: string; open?: boolean }) {
  return (
    <button
      aria-expanded={open}
      className="flex h-[13px] w-full shrink-0 items-center border-b border-[#47534a] bg-[#64786b] pl-[5px] text-left text-[7px] leading-[12px] font-bold text-[#e8f5ea]"
    >
      <Icon className="mr-[9px] size-[7px]">
        {open ? <path d="M1 5h18l-9 10z" fill="#f0fff2" /> : <path d="M4 1v18l11-9z" fill="#f0fff2" />}
      </Icon>
      {title}
    </button>
  );
}

const FIELD = 'h-[12px] w-[45px] border border-[#4a4847] bg-[#2c2a2a] pl-px text-[8px] leading-[10px] font-semibold text-white';

function Row({ label, values, slider }: { label: string; values: string[]; slider?: number }) {
  const id = label.toLowerCase().replace(/ /g, '-');
  return (
    <div className="flex h-[14px] items-center">
      <label htmlFor={id} className="w-[99px] shrink-0 text-right text-[7px] font-bold">{label}</label>
      <div className="ml-[2px] flex gap-[3px]">
        {values.map((v, i) => (
          <input key={i} id={i ? undefined : id} aria-label={i ? `${label} ${i + 1}` : undefined} defaultValue={v} className={FIELD} />
        ))}
      </div>
      {slider !== undefined && (
        <input
          type="range"
          aria-label={`${label} slider`}
          defaultValue={slider}
          className="mr-[9px] ml-[8px] h-[8px] min-w-0 flex-1 appearance-none bg-linear-to-b from-transparent from-[38%] via-[#4a4847] via-[38%] to-transparent to-[62%] [&::-webkit-slider-thumb]:h-[7px] [&::-webkit-slider-thumb]:w-[7px] [&::-webkit-slider-thumb]:appearance-none [&::-webkit-slider-thumb]:rounded-b-full [&::-webkit-slider-thumb]:border [&::-webkit-slider-thumb]:border-[#3f3d3c] [&::-webkit-slider-thumb]:bg-[#aaa6a4]"
        />
      )}
    </div>
  );
}

function Check({ label }: { label: string }) {
  return (
    <label className="ml-[101px] flex h-[13px] items-center gap-[3px] text-[7px] font-bold">
      <span className="relative flex size-[8px] items-center justify-center">
        <input type="checkbox" defaultChecked className="peer absolute inset-0 size-[8px] appearance-none bg-[#262424]" />
        <Icon className="pointer-events-none relative hidden size-[8px] peer-checked:block">
          <path d="M3 10l5 6L18 3" fill="none" stroke="#fff" strokeWidth="3" />
        </Icon>
      </span>
      {label}
    </label>
  );
}

const SMALL_BTN = 'border border-[#4a4847] bg-[#8d8482] text-center text-[7px] leading-[9px] font-bold text-white';

function AttributeEditor() {
  return (
    <aside className="flex w-[289px] shrink-0 flex-col pl-[6px] text-[7px] text-white" aria-label="Attribute Editor">
      <div className="flex h-[10px] items-center">
        <span className="h-[5px] flex-1 bg-[radial-gradient(#858280_28%,transparent_30%)] bg-[size:3px_3px]" />
        <h2 className="px-[4px] leading-[10px] font-bold">Attribute Editor</h2>
        <span className="h-[5px] flex-1 bg-[radial-gradient(#858280_28%,transparent_30%)] bg-[size:3px_3px]" />
        <button aria-label="Float"><Icon className="size-[8px]"><path d="M7 2h11v10M2 7h11v11H2z" fill="none" stroke="#111" strokeWidth="3" /></Icon></button>
        <button aria-label="Close editor" className="ml-[3px]"><Icon className="size-[8px]"><path d="M3 3l14 14M17 3L3 17" stroke="#111" strokeWidth="4" /></Icon></button>
      </div>
      <nav className="mt-[4px] flex h-[12px] items-center gap-[10px] pl-[5px] font-bold" aria-label="Attribute editor menu">
        {['List', 'Selected', 'Focus', 'Attributes', 'Show', 'Help'].map((m) => (
          <button key={m}>{m}</button>
        ))}
      </nav>
      <div className="mt-[8px] flex h-[13px] border-b border-[#4a4847] pl-[2px]" role="tablist">
        {['polyExtrudeFace3', 'polyExtrudeFace2', 'polyExtrudeFace1'].map((t, i) => (
          <button key={t} role="tab" aria-selected={i === 0} className={`w-[80px] shrink-0 border-t border-r border-[#4a4847] leading-[12px] font-bold ${i === 0 ? 'bg-[#958787]' : 'bg-[#595655]'}`}>{t}</button>
        ))}
        <button role="tab" aria-selected={false} className="min-w-0 flex-1 overflow-hidden border-t border-[#4a4847] bg-[#595655] pl-[9px] text-left leading-[12px] font-bold">po</button>
        <button aria-label="Previous tab" className="h-[12px] w-[9px] bg-[#7c7674]"><Icon className="mx-auto size-[6px]"><path d="M15 1v18L4 10z" fill="#222" /></Icon></button>
        <button aria-label="Next tab" className="mr-[2px] ml-px h-[12px] w-[9px] bg-[#8d8482]"><Icon className="mx-auto size-[6px]"><path d="M5 1v18l11-9z" fill="#fff" /></Icon></button>
      </div>
      <div className="mt-[5px] flex h-[41px] items-center pr-[5px]">
        <label htmlFor="node-name" className="w-[97px] text-right font-bold">polyExtrudeFace:</label>
        <input id="node-name" defaultValue="polyExtrudeFace3" className="ml-[4px] h-[12px] w-[103px] border border-[#4a4847] bg-[#2c2a2a] pl-px text-[7px] font-bold text-white" />
        <div className="ml-[8px] flex flex-col gap-[5px]">
          <button aria-label="Go to input"><Icon className="h-[8px] w-[11px]" box="0 0 11 8"><path d="M3 .5h7.500v7H3" fill="none" stroke="#161616" /><path d="M0 3.500h3M1 1.500l4 2L1 5.500z" fill="#000" stroke="#000" /></Icon></button>
          <button aria-label="Go to output"><Icon className="h-[8px] w-[11px]" box="0 0 11 8"><path d="M7 .5H2.500v7H7" fill="none" stroke="#161616" /><path d="M6 1l5 2.500L6 6z" fill="#000" /></Icon></button>
        </div>
        <div className="ml-auto grid w-[47px] grid-cols-2 gap-y-px">
          <button className={`${SMALL_BTN} col-span-2 h-[12px]`}>Focus</button>
          <button className={`${SMALL_BTN} col-span-2 h-[12px]`}>Presets</button>
          <button className="h-[12px] border border-[#4a4847] text-center text-[7px] leading-[10px] text-[#a19d9b]">Show</button>
          <button className={`${SMALL_BTN} h-[12px]`}>Hide</button>
        </div>
      </div>
      <div className="mt-[3px] mr-[2px] ml-[3px] flex min-h-0 flex-1 flex-col border border-[#4a4847] pt-[5px] pr-[4px]">
        <div className="flex flex-col border border-[#4a4847]">
          <SectionHead title="Transform Attributes" open />
          <div>
            <Row label="Translate" values={['0.000', '0.000', '0.000']} />
            <Row label="Rotate" values={['0.000', '0.000', '0.000']} />
            <Row label="Scale" values={['1.000', '1.000', '1.000']} />
            <Row label="Pivot" values={['-0.084', '6.456', '1.710']} />
          </div>
          <SectionHead title="Poly Extrude Curve Attributes" />
          <SectionHead title="Poly Extrude Face History" open />
          <div>
            <Row label="Divisions" values={['1']} slider={0} />
            <Row label="Offset" values={['0.000']} />
            <Row label="Local Translate" values={['0.000', '0.000', '0.000']} />
            <Row label="Local Rotate" values={['0.000', '0.000', '0.000']} />
            <Row label="Local Scale" values={['1.000', '1.000', '1.000']} />
            <div className="flex h-[14px] items-center">
              <label htmlFor="local-center" className="w-[99px] text-right font-bold">Local Center</label>
              <select
                id="local-center"
                defaultValue="middle"
                className="ml-[2px] h-[12px] w-[43px] appearance-none border border-[#4a4847] bg-[#958b8b] bg-[linear-gradient(45deg,transparent_50%,#fff_50%),linear-gradient(-45deg,transparent_50%,#fff_50%)] bg-[size:3px_3px] bg-[position:34px_4px,37px_4px] bg-no-repeat pl-px text-[7px] leading-[10px] font-bold text-white"
              >
                <option>middle</option>
              </select>
            </div>
            <Row label="Local Direction" values={['1.000', '0.000', '0.000']} />
          </div>
          <div className="mt-[3px] border-t border-[#4a4847] pt-px">
            <Row label="Random" values={['0.000']} slider={0} />
            <Row label="Smoothing Angle" values={['30.000']} slider={16} />
            <Check label="Keep Faces Together" />
            <Check label="World Space" />
          </div>
          <SectionHead title="Node Behavior" />
          <SectionHead title="Extra Attributes" />
        </div>
      </div>
      <div className="mx-auto mt-[3px] h-px w-[88px] border-t border-dotted border-[#8a8785]" />
      <label htmlFor="notes" className="flex h-[12px] items-center gap-[5px] pl-[7px] text-[7px] font-bold"><span>Notes:</span><span>polyExtrudeFace3</span></label>
      <textarea id="notes" className="mr-[2px] h-[63px] shrink-0 resize-none bg-[#353333]" />
      <div className="relative z-20 mr-[2px] flex h-[18px] shrink-0 gap-[3px] py-[2px]">
        {['Select', 'Load Attributes', 'Copy Tab'].map((b) => (
          <button key={b} className="flex-1 bg-[#1b1a1a] text-[8px] leading-[13px] text-[#6e6c6b]">{b}</button>
        ))}
      </div>
    </aside>
  );
}

function SideTabs() {
  return (
    <div className="flex w-[16px] shrink-0 flex-col border-l border-[#4a4847] text-[7px] leading-[14px] font-semibold text-white" role="tablist" aria-orientation="vertical">
      <button role="tab" aria-selected={false} className="flex h-[102px] items-center justify-center bg-[#575453] whitespace-nowrap [writing-mode:vertical-rl]">
        <span>Channel Box / Layer Editor</span>
      </button>
      <button role="tab" aria-selected className="flex h-[63px] items-center justify-center bg-[#8f8383] whitespace-nowrap [writing-mode:vertical-rl]">
        <span>Attribute Editor</span>
      </button>
    </div>
  );
}

/* ---------- time controls ---------- */

const TRANSPORT: { name: string; d: string }[] = [
  { name: 'Go to start', d: 'M2 2v12M5 8h4M13 4L8 8l5 4zM18 4l-5 4 5 4z' },
  { name: 'Step back key', d: 'M3 2v12M15 3L7 8l8 5z' },
  { name: 'Step back frame', d: 'M4 3v10M14 4L8 8l6 4z' },
  { name: 'Play backwards', d: 'M15 2L4 8l11 6z' },
  { name: 'Play forwards', d: 'M4 2l11 6-11 6z' },
  { name: 'Step forward frame', d: 'M14 3v10M4 4l6 4-6 4z' },
  { name: 'Step forward key', d: 'M15 2v12M3 3l8 5-8 5z' },
  { name: 'Go to end', d: 'M17 2v12M1 4l5 4-5 4zM7 4l5 4-5 4z' },
];

function TimeControls() {
  return (
    <div className="relative z-20 flex h-[38px] shrink-0 flex-col bg-[#101010] pt-[4px] text-[8px] text-[#777]">
      <div className="flex h-[18px]">
        <ol className="ml-[10px] flex flex-1 border border-[#1a1a1a] bg-[#2e2e2e] pr-[6px] pl-[3px]" aria-label="Time slider">
          {Array.from({ length: 24 }, (_, i) => (
            <li key={i} className={`flex h-full flex-1 items-end ${i === 0 ? 'bg-[#222]' : ''}`}>
              <span className="h-[9px] w-[2px] bg-[#050505]" />
              <span className={`self-start leading-[6px] ${i === 0 ? 'ml-[8px] pt-[8px] text-[#8a8a8a]' : 'ml-[7px] font-semibold text-[#080808]'}`}>{i + 1}</span>
            </li>
          ))}
        </ol>
        <div className="flex w-[201px] items-center">
          <input aria-label="Current time" defaultValue="1.00" className="ml-[3px] h-[14px] w-[44px] bg-[#0a0a0a] text-[8px]" />
          <div className="ml-[3px] flex flex-1 justify-around">
            {TRANSPORT.map((t) => (
              <button key={t.name} aria-label={t.name}>
                <Icon className="h-[9px] w-[11px]" box="0 0 20 16"><path d={t.d} fill="#7a7a7a" stroke="#7a7a7a" /></Icon>
              </button>
            ))}
          </div>
        </div>
      </div>
      <div className="mt-[4px] flex h-[12px] items-center">
        <input aria-label="Animation start" defaultValue="1.00" className="ml-[10px] h-[12px] w-[46px] bg-[#0a0a0a] pl-[2px] text-[8px]" />
        <input aria-label="Playback start" defaultValue="1.00" className="ml-[2px] h-[12px] w-[46px] bg-[#0a0a0a] pl-[2px] text-[8px]" />
        <div className="ml-[5px] flex h-full min-w-0 flex-1 bg-[#080808]">
          <div className="flex h-full w-1/2 items-center justify-between bg-[#232323] pr-[13px] pl-[14px] text-[7px]">
            <span>1</span>
            <span>24</span>
          </div>
        </div>
        <input aria-label="Playback end" defaultValue="24.00" className="ml-[5px] h-[12px] w-[46px] bg-[#0a0a0a] pl-[3px] text-[8px]" />
        <input aria-label="Animation end" defaultValue="48.00" className="ml-[2px] h-[12px] w-[46px] bg-[#0a0a0a] pl-[3px] text-[8px]" />
        <Icon className="ml-[4px] size-[6px]"><path d="M2 6h16l-8 9z" fill="#444" /></Icon>
        <button className="ml-[4px] w-[68px] bg-[#0a0a0a] pl-[4px] text-left leading-[12px] whitespace-nowrap">No Anim Layer</button>
        <Icon className="ml-[4px] size-[6px]"><path d="M2 6h16l-8 9z" fill="#444" /></Icon>
        <button className="ml-[4px] w-[68px] bg-[#0a0a0a] pl-[4px] text-left leading-[12px] whitespace-nowrap">No Character Set</button>
        <Icon className="ml-[9px] size-[8px]"><path d="M2 9h14M12 5l4 4-4 4" stroke="#777" strokeWidth="2" fill="none" /></Icon>
        <Icon className="mr-[3px] ml-[3px] size-[9px]"><path d="M1 2h18v16H1z" fill="#777" /><path d="M3 6h14M4 14L16 7" stroke="#a33" strokeWidth="3" /></Icon>
      </div>
    </div>
  );
}

function CommandLine() {
  return (
    <div className="flex h-[22px] shrink-0 items-center border-t border-[#8b8886] bg-[#605d5b] pt-px pr-[4px] pl-[3px] text-[7px] font-bold text-white">
      <span className="h-[14px] w-[5px] bg-[radial-gradient(#8f8c8a_28%,transparent_30%)] bg-[size:3px_3px]" />
      <label htmlFor="mel" className="w-[32px] pl-[8px]">MEL</label>
      <input id="mel" className="h-[13px] min-w-0 flex-1 rounded-r-[2px] border-r border-[#8b8886] bg-[#343132]" />
      <output className="ml-[5px] h-[13px] min-w-0 flex-1 bg-[#343132] pl-[3px] leading-[13px]">// Result: polyExtrudeFace3</output>
      <button aria-label="Script editor" className="ml-[2px] flex h-[12px] w-[11px] items-center justify-center bg-[#6d8394]">
        <Icon className="size-[9px]"><path d="M1 2h18v16H1z" fill="#fff" /><path d="M4 8h12M4 13h12" stroke="#445" strokeWidth="2" /></Icon>
      </button>
    </div>
  );
}

function HelpLine() {
  return (
    <div className="flex h-[14px] shrink-0 items-center bg-[#605d5b] pr-[3px] pl-[3px]">
      <span className="h-[12px] w-[5px] bg-[radial-gradient(#8f8c8a_28%,transparent_30%)] bg-[size:3px_3px]" />
      <p className="flex-1 border border-[#4a4847] pl-[8px] font-['Open_Sans','Noto_Sans',sans-serif] text-[7px] leading-[11px] font-semibold text-white">
        Show Manipulator Tool: Use manipulator(s) to edit selected object(s).
      </p>
    </div>
  );
}

export default function App() {
  return (
    <div className="relative flex h-screen flex-col overflow-hidden bg-[#605d5b] font-['Noto_Sans','Open_Sans',sans-serif]">
      <MenuBar />
      <TitleBar />
      <StatusLine />
      <Shelf />
      <div className="mt-[2px] flex min-h-0 flex-1">
        <ToolBox />
        <Viewport />
        <AttributeEditor />
        <SideTabs />
      </div>
      <TimeControls />
      <CommandLine />
      <HelpLine />
      <div className="h-[5px] shrink-0 bg-[repeating-linear-gradient(90deg,#0e0d0a_0_3px,#3f3d1c_3px_5px,#15120e_5px_9px,#55512a_9px_10px,#2b1d16_10px_13px)]" />
      <div className="pointer-events-none absolute inset-x-0 bottom-[41px] z-10 h-[115px] bg-black/80" />
      <svg viewBox="0 0 104 76" className="pointer-events-none absolute bottom-[61px] left-1/2 z-30 h-[76px] w-[104px] -translate-x-1/2" role="img" aria-label="Shift key">
        <path d="M51 7L13.500 42.500H28V70.500H75V42.500H89.500z" fill="#080808" />
        <path fillRule="evenodd" fill="#fff" d="M51.500 1L102 48H77v26H25V48H0zM51.500 13L21 40H34.500V65.500H68V40H82z" />
      </svg>
    </div>
  );
}
